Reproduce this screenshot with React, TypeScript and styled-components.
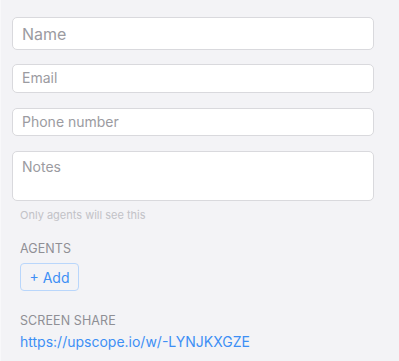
import React from "react";
import styled, { createGlobalStyle } from "styled-components";

const Global = createGlobalStyle`
  html, body { margin: 0; padding: 0; background: #f3f3f6; }
  body { font-family: Inter, "Noto Sans", sans-serif; -webkit-font-smoothing: antialiased; }
`;

const Panel = styled.div`
  width: 399px;
  height: 361px;
  box-sizing: border-box;
  background: #f3f3f6;
  border-left: 1px solid #f8f8fa;
  padding: 17px 25px 0 11px;
  display: flex;
  flex-direction: column;
`;

const Field = styled.div<{ $h: number; $size: number; $mt: number; $top?: boolean; $shift?: number }>`
  box-sizing: border-box;
  height: ${(p) => p.$h}px;
  margin-top: ${(p) => p.$mt}px;
  background: #ffffff;
  border: 1px solid #d9d9dd;
  border-radius: 5px;
  padding: ${(p) => (p.$top ? "7px 9px 0" : `${p.$shift ?? 0}px 9px 0`)};
  display: flex;
  align-items: ${(p) => (p.$top ? "flex-start" : "center")};
  color: #9b9ba1;
  font-size: ${(p) => p.$size}px;
  line-height: 1.2;
`;

const Hint = styled.div`
  margin-top: 7px;
  padding-left: 8px;
  font-size: 11px;
  color: #c2c2c7;
  line-height: 14px;
`;

const Label = styled.div<{ $mt: number }>`
  margin-top: ${(p) => p.$mt}px;
  padding-left: 8px;
  font-size: 12.5px;
  color: #8f8f95;
  letter-spacing: 0.1px;
  line-height: 15px;
`;

const AddButton = styled.div`
  margin: 7px 0 0 8px;
  box-sizing: border-box;
  width: 59px;
  height: 28px;
  border: 1px solid #b9d6fb;
  border-radius: 4px;
  display: flex;
  align-items: center;
  justify-content: center;
  color: #3d8ff5;
  font-size: 14px;
`;

const Link = styled.a`
  margin-top: 5px;
  padding-left: 8px;
  font-size: 14px;
  color: #3d8ff5;
  text-decoration: none;
  line-height: 17px;
`;

export default function App() {
  return (
    <>
      <Global />
      <Panel>
        <Field $h={33} $size={16} $mt={0} $shift={2}>Name</Field>
        <Field $h={29} $size={14} $mt={14}>Email</Field>
        <Field $h={28} $size={14} $mt={15}>Phone number</Field>
        <Field $h={50} $size={14} $mt={15} $top>Notes</Field>
        <Hint>Only agents will see this</Hint>
        <Label $mt={19}>AGENTS</Label>
        <AddButton>+ Add</AddButton>
        <Label $mt={22}>SCREEN SHARE</Label>
        <Link href="#">https://upscope.io/w/-LYNJKXGZE</Link>
      </Panel>
    </>
  );
}
